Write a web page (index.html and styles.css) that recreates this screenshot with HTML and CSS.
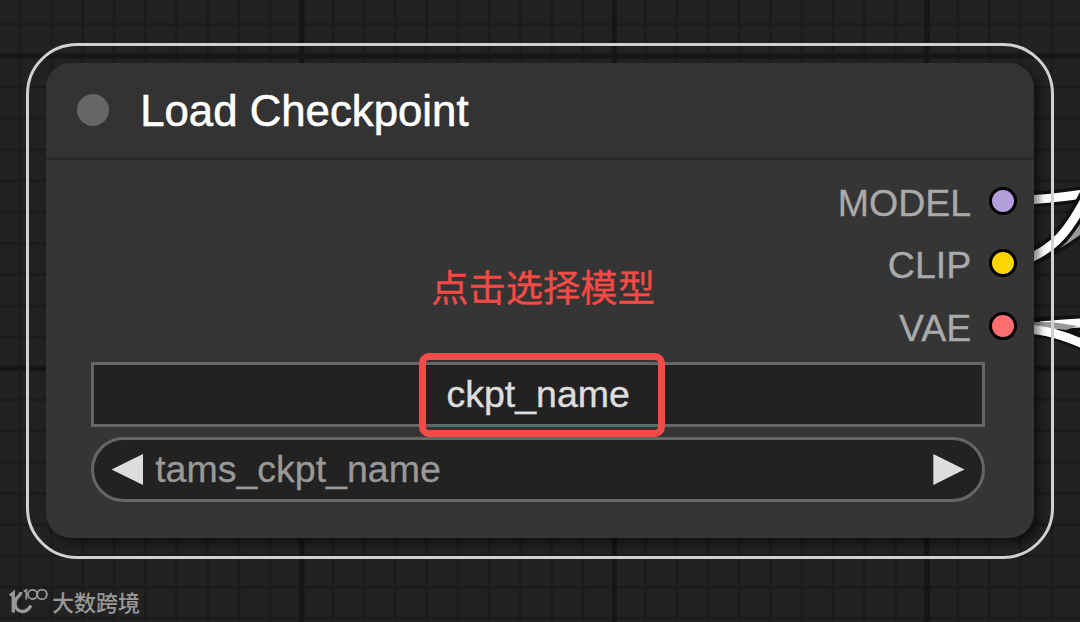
FILE: index.html
```html
<!DOCTYPE html>
<html lang="zh">
<head>
<meta charset="utf-8">
<title>Load Checkpoint</title>
<link rel="stylesheet" href="styles.css">
</head>
<body>
<main class="graph">
  <svg class="backdrop" width="1080" height="622" viewBox="0 0 1080 622" aria-hidden="true">
    <defs>
      <pattern id="minor" x="4.6" y="8.9" width="31.26" height="31.26" patternUnits="userSpaceOnUse">
        <path class="grid-minor" d="M15.6 0V31.26M0 15.6H31.26"/>
      </pattern>
      <pattern id="major" x="145.5" y="-100.4" width="312.6" height="312.6" patternUnits="userSpaceOnUse">
        <path class="grid-major" d="M156.3 0V312.6M0 156.3H312.6"/>
      </pattern>
    </defs>
    <rect width="1080" height="622" fill="url(#minor)"/>
    <rect width="1080" height="622" fill="url(#major)"/>
    <g class="links">
      <path class="link-edge" d="M1020 262C1048 252 1066 240 1090 222"/>
      <path class="link-dim" d="M1020 262C1048 252 1066 240 1090 222"/>
      <path class="link-edge" d="M1020 200C1045 199.500 1065 197 1090 193"/>
      <path class="link" d="M1020 200C1045 199.500 1065 197 1090 193"/>
      <path class="link-edge" d="M1020 262C1055 250 1070 230 1090 190"/>
      <path class="link" d="M1020 262C1055 250 1070 230 1090 190"/>
      <path class="link-edge" d="M1020 326C1045 325 1065 323.500 1090 322.500"/>
      <path class="link-edge" d="M1020 327C1045 328 1064 334 1090 346"/>
      <path class="link" d="M1040 326C1055 325 1065 323.500 1090 322.500"/>
      <path class="link-shade" d="M1034 322L1052 322L1078 326L1066 330L1034 326Z"/>
      <path class="link" d="M1020 328.500C1045 329.500 1064 335 1090 347"/>
    </g>
  </svg>

  <section class="selection">
    <article class="node">
      <header class="node-header">
        <span class="collapse-dot"></span>
        <h1 class="node-title">Load Checkpoint</h1>
      </header>
      <div class="node-body">
        <ul class="outputs">
          <li class="output"><span class="output-name">MODEL</span><span class="port port-model"></span></li>
          <li class="output"><span class="output-name">CLIP</span><span class="port port-clip"></span></li>
          <li class="output"><span class="output-name">VAE</span><span class="port port-vae"></span></li>
        </ul>
        <div class="widgets">
          <div class="widget-button">ckpt_name
            <span class="hint">点击选择模型</span>
            <span class="highlight"></span>
          </div>
          <div class="widget-combo">
            <svg class="arrow" width="32" height="32" viewBox="0 0 32 32"><path d="M0.500 16.500L32 1V32Z"/></svg>
            <span class="combo-value">tams_ckpt_name</span>
            <svg class="arrow" width="32" height="32" viewBox="0 0 32 32"><path d="M0.300 1V32L31.500 16.500Z"/></svg>
          </div>
        </div>
      </div>
    </article>
  </section>

  <footer class="watermark">
    <svg class="brand" width="40" height="28" viewBox="0 0 40 28">
      <path class="brand-main" d="M1 8.500L4.300 6V25.500M12 5C11.500 9 9 9.500 7 12C2.500 25 17 29 22 18.500"/>
      <path class="brand-loop" d="M14.800 4.500L17.300 3V12.500"/>
      <circle class="brand-loop" cx="23.600" cy="7.400" r="4.600"/>
      <circle class="brand-loop" cx="33" cy="7.400" r="4.800"/>
    </svg>
    <span class="brand-name">大数跨境</span>
  </footer>
</main>
</body>
</html>
```
FILE: styles.css
```css
* { box-sizing: border-box; }

body {
  margin: 0;
  background: #222;
  font-family: "Liberation Sans", "Noto Sans CJK SC", sans-serif;
}

.graph {
  position: relative;
  width: 1080px;
  height: 622px;
  overflow: hidden;
  padding: 42.700px 0 0 25.700px;
}

.backdrop { position: absolute; inset: 0; }
.grid-minor { stroke: #1b1b1b; stroke-width: 3; }
.grid-major { stroke: #161616; stroke-width: 5.500; }
.links path { fill: none; }
.link-edge { stroke: #111; stroke-width: 16; }
.link { stroke: #fff; stroke-width: 9; }
.link-dim { stroke: #999; stroke-width: 9; }
.links .link-shade { fill: #999; }

.selection {
  position: relative;
  width: 1028px;
  height: 516px;
  padding: 17px;
  border: 3px solid #d2d0d1;
  border-radius: 51px;
}

.node {
  display: flex;
  flex-direction: column;
  width: 988px;
  height: 475.500px;
  border-radius: 25px;
  background: #353535;
  box-shadow: 5px 5px 9px rgba(0, 0, 0, 0.5);
}

.node-header {
  display: flex;
  align-items: center;
  gap: 31.500px;
  height: 97px;
  padding: 0 31.500px 0 31px;
  border-bottom: 3px solid #2b2b2b;
  border-radius: 25px 25px 0 0;
  background: #333;
}

.collapse-dot {
  width: 32px;
  height: 32px;
  border-radius: 50%;
  background: #666;
}

.node-title {
  margin: 0;
  padding-top: 2px;
  color: #fff;
  font-size: 43.750px;
  font-weight: 400;
  line-height: 50px;
  -webkit-text-stroke: 0.600px #fff;
}

.node-body { padding: 10px 48.500px 0 45.500px; }

.outputs {
  display: flex;
  flex-direction: column;
  margin: 0 -31.500px 0 0;
  padding: 0;
  list-style: none;
}

.output {
  display: flex;
  align-items: center;
  justify-content: flex-end;
  gap: 17.500px;
  height: 62.500px;
  color: #aaa;
  font-size: 37.500px;
  -webkit-text-stroke: 0.300px #aaa;
}

.output-name { padding-top: 5px; }

.port {
  width: 28px;
  height: 28px;
  border: 3px solid #000;
  border-radius: 50%;
}
.port-model { background: #b39ddb; }
.port-clip { background: #ffd500; }
.port-vae { background: #ff6e6e; }

.widgets {
  display: flex;
  flex-direction: column;
  gap: 9.500px;
  padding-top: 4.500px;
  font-size: 37.500px;
}

.widget-button,
.widget-combo {
  display: flex;
  align-items: center;
  height: 65.500px;
  border: 3px solid #666;
  background: #222;
}

.widget-button {
  position: relative;
  justify-content: center;
  color: #ddd;
  -webkit-text-stroke: 0.400px #ddd;
}

.hint {
  position: absolute;
  left: 337px;
  top: -107px;
  color: #f54a45;
  font-family: "Noto Sans CJK SC", sans-serif;
  font-size: 37.300px;
  line-height: 56px;
  white-space: nowrap;
  -webkit-text-stroke: 0.300px #f54a45;
}

.highlight {
  position: absolute;
  left: 324.500px;
  top: -12px;
  z-index: 1;
  width: 246px;
  height: 84px;
  border: 7px solid #f54a45;
  border-radius: 10px;
}

.widget-combo {
  padding: 0 17px;
  border-radius: 33px;
  color: #999;
  -webkit-text-stroke: 0.300px #999;
}

.arrow { flex: none; fill: #ddd; stroke: none; }
.combo-value { flex: 1; padding-left: 12px; }

.watermark {
  position: relative;
  display: flex;
  align-items: flex-start;
  gap: 3.500px;
  margin: 28px 0 0 -17.200px;
  color: #999;
}

.brand { flex: none; fill: none; stroke: #999; }
.brand-main { stroke-width: 3.300; }
.brand-loop { stroke-width: 1.800; }

.brand-name {
  font-family: "Noto Sans CJK SC", sans-serif;
  font-size: 22px;
  font-weight: 500;
  line-height: 28px;
}
```
